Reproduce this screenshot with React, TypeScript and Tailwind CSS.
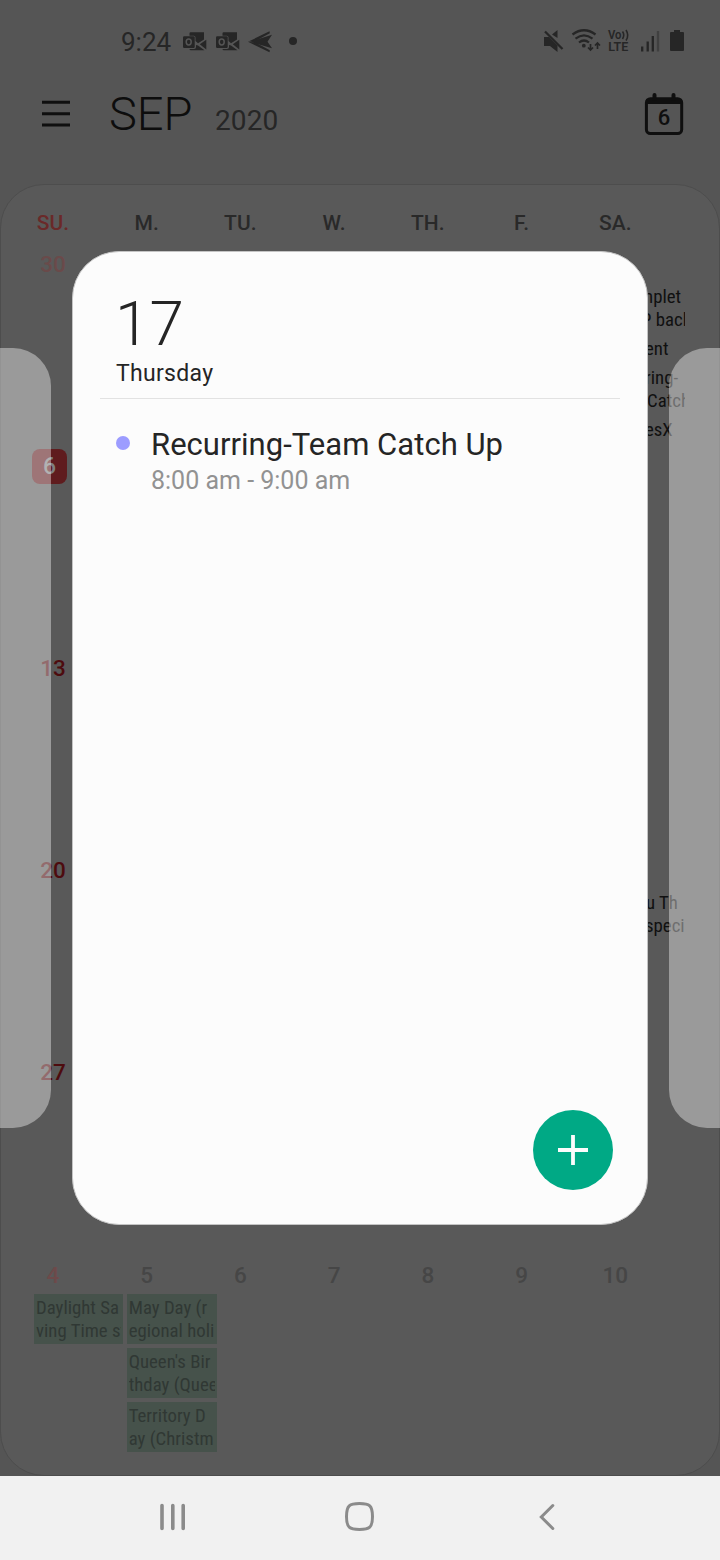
import React from "react";

const WEEKDAYS = ["SU.", "M.", "TU.", "W.", "TH.", "F.", "SA."];

function OutlookIcon() {
  return (
    <svg width="24" height="20" viewBox="0 0 24 20">
      <path d="M6.500 1.500Q6.500 .3 7.500 .3H21V7.500L15 11.300 12.500 9V5.500Q12.500 3.700 10.700 3.700H6.500Z" fill="#262626" />
      <path d="M23.300 7.800V17.500L16.800 12.300Z M6.500 17H11Q13 17 13 15V13L15 13.500 21.500 18.300H7.800Q6.500 18.300 6.500 17Z" fill="#262626" />
      <rect x="0" y="4.300" width="11.700" height="11.600" rx="1.200" fill="#262626" />
      <ellipse cx="5.700" cy="10" rx="2.500" ry="2.900" fill="none" stroke="#555" strokeWidth="1.500" />
    </svg>
  );
}

function StatusBar() {
  return (
    <div className="flex h-[84px] items-center justify-between pl-[121px] pr-[35px] text-[#262626]">
      <div className="flex items-center">
        <span className="w-[62px] text-[26px] leading-none">9:24</span>
        <OutlookIcon />
        <span className="w-[9px]" />
        <OutlookIcon />
        <svg className="ml-[8px]" width="26" height="22" viewBox="0 0 26 22">
          <path d="M0 10.800 21.500 .3 21.800 2.300 8 9.800Z" fill="#262626" />
          <path d="M2 10.800 24 3.800 19.500 10.800 24 17.300Z" fill="#262626" />
          <path d="M0 10.800 21.500 21.300 21.800 19.300 8 11.800Z" fill="#262626" />
        </svg>
        <span className="ml-[15px] size-2 -translate-y-px rounded-full bg-[#262626]" />
      </div>
      <svg className="-mt-[2px]" width="142" height="26" viewBox="543 28 142 26" fill="none">
        <path d="M544 37H549L557.500 45.500V52L550 46H544ZM557.500 30V38L552 34.500Z" fill="#262626" />
        <path d="M545 31.500 562.500 49" stroke="#262626" strokeWidth="2.300" />
        <g stroke="#262626" strokeWidth="2.200">
          <path d="M572.500 34.500Q584 26 595.500 34.500" />
          <path d="M575.500 38.700Q584 32 592.500 38.700" />
          <path d="M579 42.500Q584 38.500 589 42.500" />
        </g>
        <circle cx="583.800" cy="45.700" r="1.900" fill="#262626" />
        <path d="M590.500 44V50M588 47.500 590.500 50 593 47.500M597.500 49V43M595 45.500 597.500 43 600 45.500" stroke="#262626" strokeWidth="1.700" />
        <text x="608" y="39" fontSize="12" fontWeight="600" fill="#262626" textLength="13.500" lengthAdjust="spacingAndGlyphs">Vo</text>
        <path d="M622.500 31.500Q625 35 622.500 39M626 30Q629.500 35.500 626 40.500" stroke="#262626" strokeWidth="1.600" />
        <text x="608.300" y="51" fontSize="12" fontWeight="600" fill="#262626" textLength="20" lengthAdjust="spacingAndGlyphs">LTE</text>
        <path d="M642.200 46.500V51.500M647.700 41.500V51.500M652.800 36V51.500" stroke="#262626" strokeWidth="2.300" />
        <path d="M658 31V51.500" stroke="#404040" strokeWidth="2.300" />
        <path d="M674 30H680V32H683Q684 32 684 33V50Q684 51 683 51H671Q670 51 670 50V33Q670 32 671 32H674Z" fill="#262626" />
      </svg>
    </div>
  );
}

function Header() {
  return (
    <header className="flex h-[100px] items-start pl-[42px] pr-[36px]">
      <svg className="mt-4" width="28" height="28" viewBox="0 0 28 28">
        <path d="M0 2.300H28M0 13.700H28M0 25H28" stroke="#0f0f0f" strokeWidth="2.900" />
      </svg>
      <h1 className="ml-[39px] mt-[6px] w-[106px] text-[47px] font-light leading-[48px] text-[#0d0d0d]">SEP</h1>
      <span className="mt-[21px] text-[28px] leading-8 tracking-[0.1px] text-[#262626]">2020</span>
      <svg className="ml-auto mt-[8px]" width="40" height="44" viewBox="0 0 40 44">
        <rect x="2.400" y="6.700" width="35.300" height="34.800" rx="4" fill="none" stroke="#0f0f0f" strokeWidth="3" />
        <path d="M2 7H38V12H2Z" fill="#0f0f0f" />
        <path d="M10.500 3V7M29.500 3V7" stroke="#0f0f0f" strokeWidth="4" strokeLinecap="round" />
        <text x="20" y="33" textAnchor="middle" fontSize="22" fontWeight="500" fill="#0f0f0f">6</text>
      </svg>
    </header>
  );
}

const CONDENSED = "font-['Roboto_Condensed','Roboto',sans-serif] [font-stretch:75%] text-[18.800px] leading-[23px] whitespace-pre";

function Holiday({ lines, width }: { lines: string[]; width: string }) {
  return (
    <div className={`${CONDENSED} ${width} h-[50px] bg-[#46524b] px-[2px] pt-[3px] text-[#303834]`}>
      {lines.map((l) => (
        <div key={l} className="overflow-hidden">{l}</div>
      ))}
    </div>
  );
}

function SaturdayEvent({ lines }: { lines: { text: string; pad: string }[] }) {
  return (
    <div className={`${CONDENSED} w-[88.500px] pt-[2px] text-[#101010]`}>
      {lines.map((l) => (
        <div key={l.text} className={`overflow-hidden ${l.pad}`}>{l.text}</div>
      ))}
    </div>
  );
}

function DayLabel({ children, tone }: { children: string; tone: string }) {
  return <div className={`flex h-[43px] w-[38px] items-center justify-center pt-[4px] text-[22.500px] font-medium leading-none ${tone}`}>{children}</div>;
}

function Week({ day, tone, children }: { day: React.ReactNode; tone?: string; children?: React.ReactNode }) {
  return (
    <div className="flex h-[202px] justify-between">
      <div>{tone ? <DayLabel tone={tone}>{String(day)}</DayLabel> : day}</div>
      <div className="w-[94px] pt-[43px]">{children}</div>
    </div>
  );
}

function Calendar() {
  return (
    <section className="h-[1292px] overflow-hidden rounded-[44px] border border-[#4d4d4d] bg-[#595959] pl-[33px] pr-[29px]">
      <div className="grid h-[56px] grid-cols-7 items-end pb-[7px]">
        {WEEKDAYS.map((d, i) => (
          <div key={d} className={`flex w-[38px] justify-center text-[21px] font-medium leading-[22px] tracking-[0.1px] ${i === 0 ? "text-[#6a2929]" : "text-[#292929]"}`}>{d}</div>
        ))}
      </div>
      <Week day="30" tone="text-[#6a4a4a]">
        <div className="flex flex-col gap-1">
          <SaturdayEvent lines={[{ text: "mplet", pad: "pl-[43px]" }, { text: "P back", pad: "pl-[45px]" }]} />
          <SaturdayEvent lines={[{ text: "ent", pad: "pl-[49px]" }]} />
          <SaturdayEvent lines={[{ text: "ring-", pad: "pl-[49px]" }, { text: "Catch", pad: "pl-[51px]" }]} />
          <SaturdayEvent lines={[{ text: "esX", pad: "pl-[49px]" }]} />
        </div>
      </Week>
      <Week
        day={
          <div className="-ml-[2px] mt-[6px] flex size-[35px] items-center justify-center rounded-lg bg-[#5f1c1e] text-[23px] font-medium leading-none text-[#808080]">6</div>
        }
      />
      <Week day="13" tone="text-[#4d0b0e]" />
      <Week day="20" tone="text-[#4d0b0e]">
        <SaturdayEvent lines={[{ text: "u Th", pad: "pl-[50px]" }, { text: "speci", pad: "pl-[49px]" }]} />
      </Week>
      <Week day="27" tone="text-[#4d0b0e]" />
      <div className="grid grid-cols-7">
        {["4", "5", "6", "7", "8", "9", "10"].map((d, i) => (
          <div key={d}>
            <div className="h-[43px] pt-px">
              <DayLabel tone={i === 0 ? "text-[#6d4a4a]" : "text-[#464646]"}>{d}</DayLabel>
            </div>
            {i === 0 && <Holiday width="w-[89px]" lines={["Daylight Sa", "ving Time st"]} />}
            {i === 1 && (
              <div className="-ml-px flex flex-col gap-1">
                <Holiday width="w-[90px]" lines={["May Day (r", "egional holi"]} />
                <Holiday width="w-[90px]" lines={["Queen's Bir", "thday (Queen"]} />
                <Holiday width="w-[90px]" lines={["Territory D", "ay (Christm"]} />
              </div>
            )}
          </div>
        ))}
      </div>
    </section>
  );
}

function DayDialog() {
  return (
    <div className="absolute left-[72px] top-[251px] flex h-[974px] w-[576px] flex-col rounded-[47px] border border-[#c4c4c4] bg-[#fcfcfc] px-[27px] pt-[38px] text-[#252525]">
      <div className="h-[109px] border-b border-[#e2e2e2] pl-4">
        <div className="-ml-px text-[62px] font-light leading-[68px]">17</div>
        <div className="mt-[2px] text-[23px] leading-[28px] tracking-[0.300px]">Thursday</div>
      </div>
      <div className="flex pl-4 pt-[28px]">
        <span className="mt-[9px] size-[14px] rounded-full bg-[#9c9cff]" />
        <div className="ml-[21px]">
          <div className="text-[31px] leading-[36px] tracking-[0.030px]">Recurring-Team Catch Up</div>
          <div className="mt-[3px] text-[25px] leading-[30px] text-[#929292]">8:00 am - 9:00 am</div>
        </div>
      </div>
      <button aria-label="Add event" className="mb-[34px] ml-auto mr-[7px] mt-auto flex size-20 items-center justify-center rounded-full bg-[#00a985]">
        <svg width="30" height="30" viewBox="0 0 30 30">
          <path d="M15 0V30M0 15H30" stroke="#fcfcfc" strokeWidth="3.800" />
        </svg>
      </button>
    </div>
  );
}

export default function App() {
  return (
    <div className="relative flex h-[1560px] w-[720px] flex-col overflow-hidden bg-[#555] font-['Roboto',sans-serif]">
      <StatusBar />
      <Header />
      <Calendar />
      <nav className="flex h-[84px] items-center bg-[#f1f1f1] pb-[3px] pl-[160px]">
        <svg width="26" height="28" viewBox="0 0 26 28">
          <path d="M2 2.500V25.500M12.800 2.500V25.500M23.200 2.500V25.500" stroke="#8b8b8b" strokeWidth="3.600" strokeLinecap="round" />
        </svg>
        <svg className="ml-[158px]" width="31" height="31" viewBox="0 0 31 31">
          <path d="M15.500 2.500C25.500 2.500 28.500 4.500 28.500 15.500S25.500 28.500 15.500 28.500 2.500 26.500 2.500 15.500 5.500 2.500 15.500 2.500Z" fill="none" stroke="#8b8b8b" strokeWidth="3" />
        </svg>
        <svg className="ml-[163px]" width="17" height="28" viewBox="0 0 17 28">
          <path d="M14.800 2.500 3.300 14 14.800 25.500" fill="none" stroke="#8b8b8b" strokeWidth="3" strokeLinecap="round" />
        </svg>
      </nav>
      <div className="absolute -left-10 top-[348px] h-[780px] w-[91px] rounded-[38px] bg-[#fcfcfc]/40" />
      <div className="absolute left-[669px] top-[348px] h-[780px] w-[91px] rounded-[38px] bg-[#fcfcfc]/40" />
      <DayDialog />
    </div>
  );
}
